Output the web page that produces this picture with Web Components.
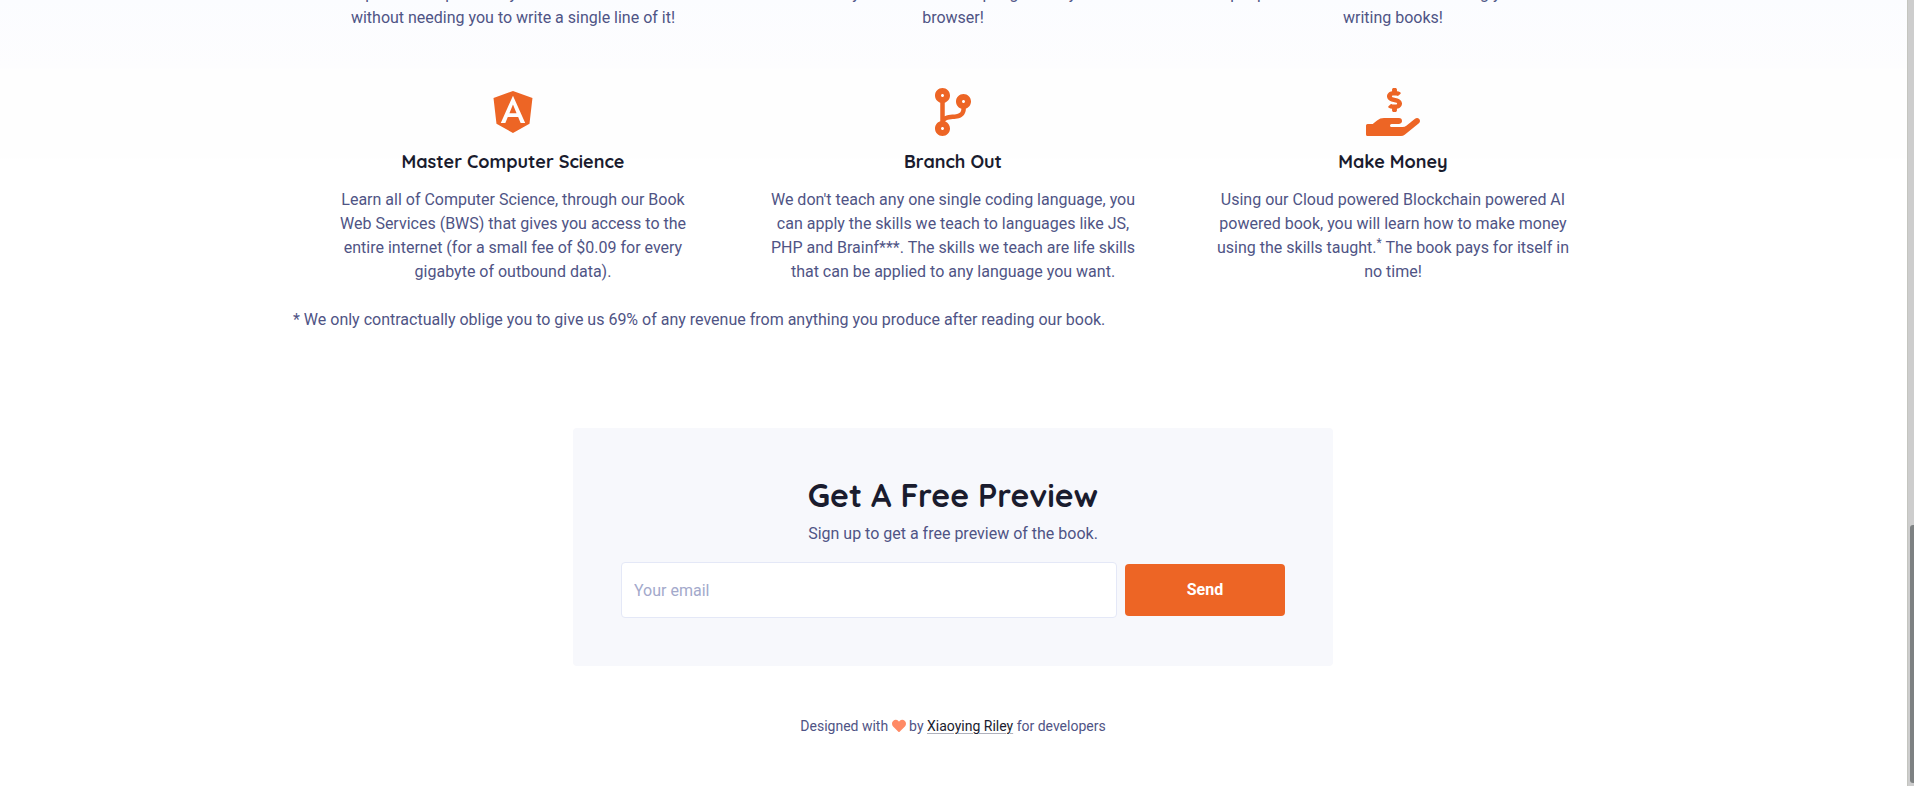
<!DOCTYPE html>
<html lang="en">
<head>
<meta charset="utf-8">
<title>Get A Free Preview</title>
<style>
  :root {
    --accent: #ed6525;
    --text: #4f5485;
    --heading: #1a1c2e;
    --panel: #f7f8fc;
    --line: #e4e8f7;
    --placeholder: #a3a9cb;
    --display: Quicksand, Lato, sans-serif;
  }
  body {
    margin: 0;
    color: var(--text);
    font: 16px/24px Roboto, "Liberation Sans", sans-serif;
  }
</style>
</head>
<body>
<scroll-view>
  <benefit-grid>
    <benefit-card>A product helps make you a better coder even without needing you to write a single line of it!</benefit-card>
    <benefit-card>Directly with modern scripting inside your<br>browser!</benefit-card>
    <benefit-card>people around the world and making you start writing books!</benefit-card>
    <benefit-card icon="angular" heading="Master Computer Science">Learn all of Computer Science, through our Book Web Services (BWS) that gives you access to the entire internet (for a small fee of $0.09 for every gigabyte of outbound data).</benefit-card>
    <benefit-card icon="branch" heading="Branch Out">We don't teach any one single coding language, you can apply the skills we teach to languages like JS, PHP and Brainf***. The skills we teach are life skills that can be applied to any language you want.</benefit-card>
    <benefit-card icon="money" heading="Make Money">Using our Cloud powered Blockchain powered AI powered book, you will learn how to make money using the skills taught.<foot-mark>*</foot-mark> The book pays for itself in no time!</benefit-card>
    <span slot="note">* We only contractually oblige you to give us 69% of any revenue from anything you produce after reading our book.</span>
  </benefit-grid>
  <signup-panel heading="Get A Free Preview">Sign up to get a free preview of the book.</signup-panel>
  <page-footer></page-footer>
</scroll-view>

<script>
const define = (name, render) => customElements.define(name, class extends HTMLElement {
  connectedCallback() {
    if (this.shadowRoot) return;
    const template = document.createElement('template');
    template.innerHTML = render(this);
    this.attachShadow({ mode: 'open' }).append(template.content.cloneNode(true));
  }
});

const ICONS = {
  angular: ['0 0 448 512', 'M185.7 268.1h76.2l-38.1-91.6-38.1 91.6zM223.8 32L16 106.4l31.8 275.7 176 97.9 176-97.9 31.8-275.7zM354 373.8h-48.6l-26.2-65.4H168.6l-26.2 65.4H93.7L223.8 81.5z'],
  branch: ['0 0 384 512', 'M384 144c0-44.2-35.8-80-80-80s-80 35.8-80 80c0 36.4 24.3 67.1 57.5 76.8-.6 16.1-4.2 28.5-11 36.9-15.4 19.2-49.3 22.4-85.2 25.7-28.2 2.6-57.4 5.4-81.3 16.9v-144c32.5-10.2 56-40.5 56-76.3 0-44.2-35.8-80-80-80S0 35.8 0 80c0 35.8 23.5 66.1 56 76.3v199.3C23.5 365.9 0 396.2 0 432c0 44.2 35.8 80 80 80s80-35.8 80-80c0-34-21.2-63.1-51.2-74.6 3.1-5.2 7.8-9.8 14.9-13.4 16.2-8.2 40.4-10.4 66.1-12.8 42.2-3.9 90-8.4 118.2-43.4 14-17.4 21.1-39.8 21.6-67.9 31.6-10.8 54.4-40.7 54.4-75.9zM80 64c8.8 0 16 7.2 16 16s-7.2 16-16 16-16-7.2-16-16 7.2-16 16-16zm0 384c-8.8 0-16-7.2-16-16s7.2-16 16-16 16 7.2 16 16-7.2 16-16 16zm224-320c8.8 0 16 7.2 16 16s-7.2 16-16 16-16-7.2-16-16 7.2-16 16-16z'],
  money: ['0 0 576 512', 'M271.06,144.3l54.27,14.3a8.59,8.59,0,0,1,6.63,8.1c0,4.6-4.09,8.4-9.12,8.4h-35.6a30,30,0,0,1-11.19-2.2c-5.24-2.2-11.28-1.7-15.3,2l-19,17.5a11.68,11.68,0,0,0-2.25,2.66,11.42,11.42,0,0,0,3.88,15.74,83.77,83.77,0,0,0,34.51,11.5V240c0,8.8,7.83,16,17.37,16h17.37c9.55,0,17.38-7.2,17.38-16V222.4c32.93-3.6,57.84-31,53.5-63-3.15-23-22.46-41.3-46.56-47.7L282.68,97.4a8.59,8.59,0,0,1-6.63-8.1c0-4.6,4.09-8.4,9.12-8.4h35.6A30,30,0,0,1,332,83.1c5.23,2.2,11.28,1.7,15.3-2l19-17.5A11.31,11.31,0,0,0,368.47,61a11.43,11.43,0,0,0-3.84-15.78,83.82,83.82,0,0,0-34.52-11.5V16c0-8.8-7.82-16-17.37-16H295.37C285.82,0,278,7.2,278,16V33.6c-32.89,3.6-57.85,31-53.51,63C227.63,119.6,247,137.9,271.06,144.3ZM565.27,328.1c-11.8-10.7-30.2-10-42.6,0L430.27,402a63.64,63.64,0,0,1-40,14H272a16,16,0,0,1,0-32h78.29c15.9,0,30.71-10.9,33.25-26.6a31.2,31.2,0,0,0,.46-5.46A32,32,0,0,0,352,320H192a117.66,117.66,0,0,0-74.1,26.29L71.4,384H16A16,16,0,0,0,0,400v96a16,16,0,0,0,16,16H372.77a64,64,0,0,0,40-14L564,377a32,32,0,0,0,1.28-48.9Z'],
  heart: ['0 0 512 512', 'M462.3 62.6C407.5 15.9 326 24.3 275.7 76.2L256 96.5l-19.7-20.3C186.1 24.3 104.5 15.9 49.7 62.6c-62.8 53.6-66.1 149.8-9.9 207.9l193.5 199.8c12.5 12.9 32.8 12.9 45.3 0l193.5-199.8c56.3-58.1 53-154.3-9.8-207.9z']
};

define('fa-icon', el => {
  const [box, path] = ICONS[el.getAttribute('name')];
  return `
    <style>
      :host { display: inline-block; }
      svg { display: block; height: 100%; margin: 0 auto; fill: currentColor; }
    </style>
    <svg viewBox="${box}" aria-hidden="true"><path d="${path}"/></svg>`;
});

define('scroll-view', () => `
  <style>
    :host { display: grid; grid-template-columns: 1fr 7px; height: 100vh; overflow: hidden; }
    main {
      display: flex; flex-direction: column; justify-content: flex-end;
      min-height: 0; min-width: 0; overflow: hidden; padding-right: 1px;
      background: linear-gradient(#fbfcff, #fdfdfe 68px, #fefefe 70px, #fefefe 157px, #fff 159px);
    }
    .track {
      display: flex; flex-direction: column; justify-content: flex-end;
      box-sizing: border-box; padding: 0 0 3px 2px;
      background: #cdcdcd; border-left: 1px solid #c4c5bf;
    }
    .thumb { height: 33%; background: #7d8182; border-radius: 3px 0 0 3px; }
  </style>
  <main><slot></slot></main>
  <div class="track"><div class="thumb"></div></div>`);

define('benefit-grid', () => `
  <style>
    :host { display: block; flex: none; width: 100%; max-width: 1320px; margin: 0 auto; }
    .grid { display: grid; grid-template-columns: repeat(3, 1fr); }
    p { margin: 0; }
  </style>
  <section>
    <div class="grid"><slot></slot></div>
    <p><slot name="note"></slot></p>
  </section>`);

define('benefit-card', el => `
  <style>
    :host { display: block; padding: 24px 36px; text-align: center; }
    :host([icon]) { padding-top: 34px; }
    fa-icon { display: block; height: 48px; margin-bottom: 15px; color: var(--accent); }
    h3 { margin: 0 0 15px; color: var(--heading); font: 700 18px/22px var(--display); }
    p { margin: 0; }
  </style>
  ${el.hasAttribute('icon') ? `<fa-icon name="${el.getAttribute('icon')}"></fa-icon>
  <h3>${el.getAttribute('heading')}</h3>` : ''}
  <p><slot></slot></p>`);

define('foot-mark', () => `<style>
    :host { display: inline; }
    sup { font-size: 12px; line-height: 0; }
  </style><sup><slot></slot></sup>`);

define('signup-panel', el => `
  <style>
    :host {
      display: block; flex: none; box-sizing: border-box;
      width: 100%; max-width: 760px; margin: 96px auto 0; padding: 48px;
      background: var(--panel); border-radius: 4px; text-align: center;
    }
    h2 { margin: 0 0 8px; color: var(--heading); font: 700 32px/38px var(--display); }
    p { margin: 0 0 16px; }
    form { display: flex; align-items: center; gap: 8px; }
    input {
      flex: 1; min-width: 0; box-sizing: border-box; height: 56px; padding: 0 12px;
      border: 1px solid var(--line); border-radius: 4px; background: #fff;
      color: var(--text); font: inherit;
    }
    input::placeholder { color: var(--placeholder); opacity: 1; }
    button {
      width: 160px; height: 52px; padding: 0; border: 0; border-radius: 4px;
      background: var(--accent); color: #fff; font: inherit; font-weight: 700;
    }
  </style>
  <h2>${el.getAttribute('heading')}</h2>
  <p><slot></slot></p>
  <form>
    <input type="email" placeholder="Your email" aria-label="Your email">
    <button type="button">Send</button>
  </form>`);

define('page-footer', () => `
  <style>
    :host { display: block; flex: none; padding: 48px 0; text-align: center; font-size: 14px; }
    fa-icon { height: 14px; vertical-align: -2px; color: #ff8a65; }
    a { color: var(--heading); text-decoration: underline #b0b2bd 1px; text-underline-offset: 2px; }
  </style>
  <footer>Designed with <fa-icon name="heart"></fa-icon> by <a href="#">Xiaoying Riley</a> for developers</footer>`);
</script>
</body>
</html>
